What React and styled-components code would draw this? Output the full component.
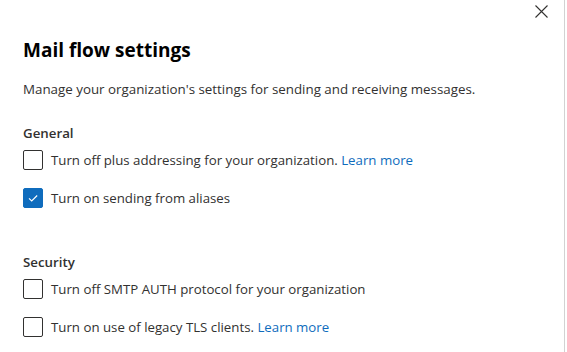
import React from "react";
import styled, { createGlobalStyle } from "styled-components";

const GlobalStyle = createGlobalStyle`
  html, body {
    margin: 0;
    padding: 0;
    background: #fff;
  }
  body {
    font-family: "Open Sans", "Noto Sans", sans-serif;
    color: #323130;
  }
`;

const Panel = styled.div`
  box-sizing: border-box;
  width: 565px;
  height: 352px;
  border-right: 1px solid #d2d2d2;
  padding-left: 23px;
  display: flex;
  flex-direction: column;
  overflow: hidden;
`;

const TopBar = styled.div`
  height: 23px;
  display: flex;
  justify-content: flex-end;
  align-items: center;
  padding-right: 16px;
`;

const CloseButton = styled.button`
  width: 14px;
  height: 14px;
  padding: 0;
  border: none;
  background: none;
  display: flex;
  align-items: center;
  justify-content: center;
  cursor: pointer;
`;

const Title = styled.h1`
  margin: 13px 0 0;
  font-size: 19px;
  line-height: 28px;
  font-weight: 700;
  color: #000;
`;

const Description = styled.p`
  margin: 15px 0 0;
  font-size: 13.35px;
  line-height: 20px;
`;

const SectionTitle = styled.h2`
  margin: ${({ $top }) => $top}px 0 0;
  font-size: 13.3px;
  line-height: 20px;
  font-weight: 600;
  color: #323130;
`;

const OptionList = styled.div`
  margin-top: 7px;
  display: flex;
  flex-direction: column;
  gap: 18px;
`;

const Option = styled.label`
  display: flex;
  align-items: center;
  gap: 8px;
  font-size: 13.25px;
  line-height: 20px;
`;

const Box = styled.span`
  box-sizing: border-box;
  width: 20px;
  height: 20px;
  flex: none;
  border-radius: 2px;
  border: 1px solid ${({ $checked }) => ($checked ? "#0f6cbd" : "#323130")};
  background: ${({ $checked }) => ($checked ? "#0f6cbd" : "#fff")};
  display: flex;
  align-items: center;
  justify-content: center;
`;

const Link = styled.a`
  color: #0f6cbd;
  text-decoration: none;
`;

function Checkbox({ checked, children }) {
  return (
    <Option>
      <Box $checked={checked}>
        {checked && (
          <svg width="12" height="12" viewBox="0 0 12 12">
            <path d="M2 6.3l2.7 2.7L10.2 3.5" fill="none" stroke="#fff" strokeWidth="1.1" />
          </svg>
        )}
      </Box>
      <span>{children}</span>
    </Option>
  );
}

export default function App() {
  return (
    <>
      <GlobalStyle />
      <Panel>
        <TopBar>
          <CloseButton aria-label="Close">
            <svg width="13" height="13" viewBox="0 0 13 13">
              <path d="M0.5 0.5l12 12M12.5 0.5l-12 12" stroke="#323130" strokeWidth="1.1" />
            </svg>
          </CloseButton>
        </TopBar>
        <Title>Mail flow settings</Title>
        <Description>
          Manage your organization's settings for sending and receiving messages.
        </Description>

        <SectionTitle $top={24}>General</SectionTitle>
        <OptionList>
          <Checkbox>
            Turn off plus addressing for your organization. <Link href="#">Learn more</Link>
          </Checkbox>
          <Checkbox checked>Turn on sending from aliases</Checkbox>
        </OptionList>

        <SectionTitle $top={44}>Security</SectionTitle>
        <OptionList>
          <Checkbox>Turn off SMTP AUTH protocol for your organization</Checkbox>
          <Checkbox>
            Turn on use of legacy TLS clients. <Link href="#">Learn more</Link>
          </Checkbox>
        </OptionList>
      </Panel>
    </>
  );
}
